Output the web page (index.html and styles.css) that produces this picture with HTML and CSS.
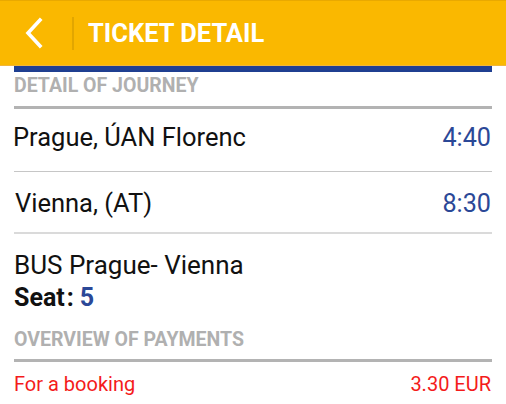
FILE: index.html
```html
<!DOCTYPE html>
<html>
<head>
<meta charset="utf-8">
<link rel="stylesheet" href="styles.css">
</head>
<body>
<header class="bar">
  <div class="back">
    <svg width="20" height="32" viewBox="0 0 20 32"><polyline points="16,3 4,16 16,29" fill="none" stroke="#fff" stroke-width="3.6" stroke-linecap="square"/></svg>
  </div>
  <div class="sep"></div>
  <h1 class="title">TICKET DETAIL</h1>
</header>
<main class="content">
  <div class="accent"></div>
  <h2 class="section">DETAIL OF JOURNEY</h2>
  <div class="row first">
    <span class="place">Prague, ÚAN Florenc</span>
    <span class="time">4:40</span>
  </div>
  <div class="row second">
    <span class="place">Vienna, (AT)</span>
    <span class="time">8:30</span>
  </div>
  <div class="info">
    <div class="line">BUS Prague- Vienna</div>
    <div class="seat">Seat<span class="colon">:</span><span class="num">5</span></div>
  </div>
  <h2 class="section pay">OVERVIEW OF PAYMENTS</h2>
  <div class="payrow">
    <span>For a booking</span>
    <span>3.30 EUR</span>
  </div>
</main>
</body>
</html>
```
FILE: styles.css
```css
html, body { margin: 0; padding: 0; background: #fff; }
body { font-family: Roboto, "Noto Sans", sans-serif; width: 506px; height: 404px; overflow: hidden; }
.bar {
  height: 66px;
  background: #fab800;
  border-top: 1px solid #e9a900;
  border-bottom: 1px solid #f0b53a;
  display: flex;
  align-items: center;
  box-sizing: border-box;
}
.back { width: 72px; display: flex; padding-left: 24px; box-sizing: border-box; }
.back svg { display: block; }
.sep { width: 2px; height: 33px; background: #e2a600; }
.title { margin: 0 0 0 14px; color: #fff; font-size: 25.5px; font-weight: 700; line-height: 30px; }
.content { margin: 0 14px; }
.accent { height: 6px; background: #1f3f91; }
.section {
  margin: 0; font-size: 19.5px; font-weight: 700; color: #b0b0b0;
  line-height: 20px; padding: 4px 0 10px; border-bottom: 3px solid #b3b3b3;
}
.row { display: flex; justify-content: space-between; align-items: baseline; line-height: 30px; }
.row.first { padding: 13px 0 18px; border-bottom: 1px solid #c6c6c6; }
.row.second { padding: 16px 0 13px; border-bottom: 2px solid #dadada; }
.place { font-size: 25.5px; color: #111; }
.first .place { margin-left: -1px; }
.second .place { margin-left: 1px; }
.time { font-size: 25.2px; color: #2b4897; margin-right: 1px; }
.info { padding-top: 16px; }
.line { font-size: 26px; color: #111; line-height: 30px; }
.seat { font-size: 25px; font-weight: 700; color: #111; line-height: 30px; margin-top: 3px; }
.colon { margin: 0 6px 0 2px; }
.num { color: #2b4897; }
.section.pay { margin-top: 13px; padding-bottom: 9px; }
.payrow { display: flex; justify-content: space-between; color: #f41b1b; font-size: 20px; line-height: 24px; padding-top: 10px; margin-right: 1px; }
```
